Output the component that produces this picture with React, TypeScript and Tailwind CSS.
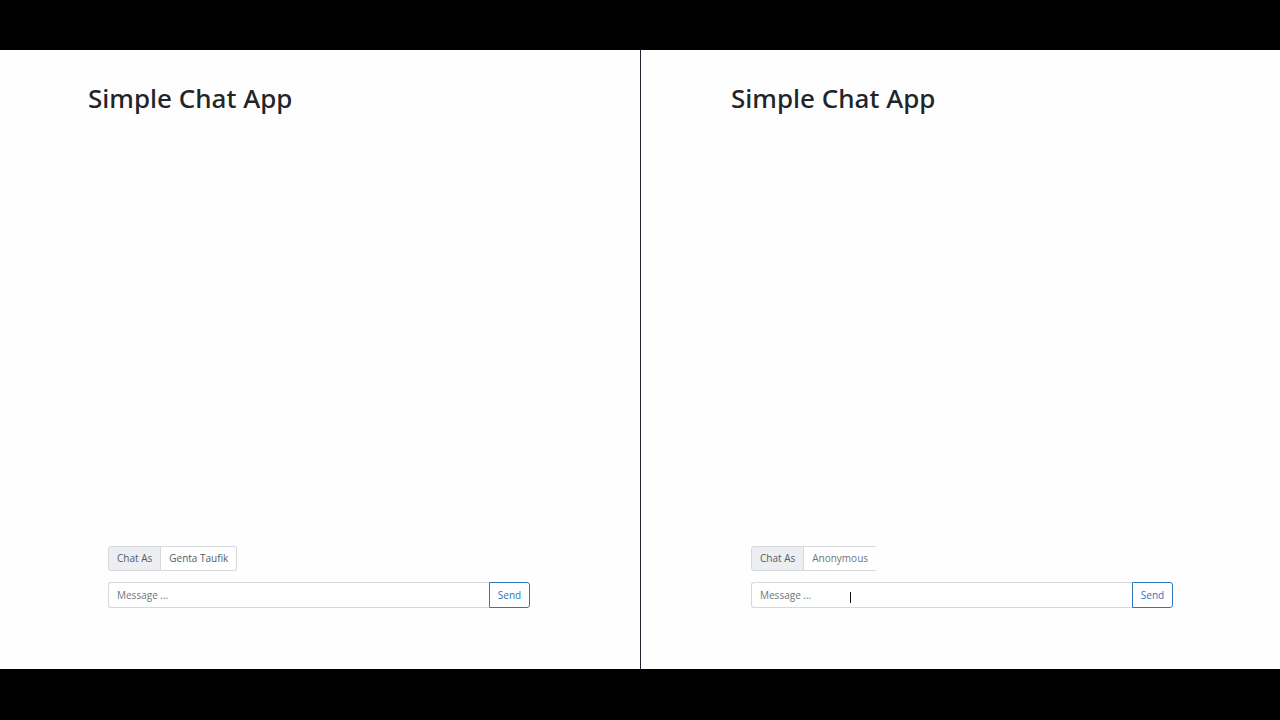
import React from 'react';

type PaneProps = {
  name: string;
  closed?: boolean;
  cursor?: boolean;
};

function ChatPane({ name, closed = true, cursor = false }: PaneProps) {
  return (
    <div className="relative flex h-full flex-col bg-[#fefefe]">
      {/* Heading */}
      <h1
        className="mt-[32px] pl-[88px] text-[26px] leading-[32px] font-medium text-[#212529]"
        style={{ fontFamily: '"Noto Sans", "Open Sans", sans-serif' }}
      >
        Simple Chat App
      </h1>

      <div className="flex-1" />

      {/* Chat controls */}
      <div className="flex w-[530px] flex-col gap-[11px] pb-[61px] pl-[108px] text-[10px] text-[#555b62]">
        <div className="flex h-[25px]">
          <span className="flex items-center rounded-l-[3px] border border-[#d6d8dc] bg-[#eceef2] px-[8px]">
            Chat As
          </span>
          <span
            className={
              closed
                ? 'flex items-center rounded-r-[3px] border border-l-0 border-[#d6d8dc] bg-white px-[8px]'
                : 'flex items-center border-y border-[#d6d8dc] bg-white pl-[8px] pr-[8px] text-[#6c757d]'
            }
          >
            {name}
          </span>
        </div>

        <div className="flex h-[26px]">
          <input
            readOnly
            placeholder="Message ..."
            className="min-w-0 flex-1 rounded-l-[3px] border border-r-0 border-[#d6d8dc] bg-white px-[8px] text-[10px] outline-none placeholder:text-[#6c757d]"
          />
          <button className="w-[41px] rounded-r-[3px] border border-[#2f74c0] bg-white text-[10px] text-[#2f74c0]">
            Send
          </button>
        </div>
      </div>

      {cursor && (
        <div className="pointer-events-none absolute left-[207px] top-[542px] h-[11px] w-px bg-[#111]" />
      )}
    </div>
  );
}

export default function App() {
  return (
    <div
      className="flex h-[720px] w-[1280px] flex-col bg-black"
      style={{ fontFamily: '"Open Sans", "Noto Sans", sans-serif' }}
    >
      <div className="h-[50px]" />
      <div className="flex h-[619px]">
        <div className="w-[640px]">
          <ChatPane name="Genta Taufik" />
        </div>
        <div className="w-px bg-[#23232f]" />
        <div className="flex-1 bg-[#fefefe] pl-[2px]">
          <ChatPane name="Anonymous" closed={false} cursor />
        </div>
      </div>
      <div className="flex-1" />
    </div>
  );
}
